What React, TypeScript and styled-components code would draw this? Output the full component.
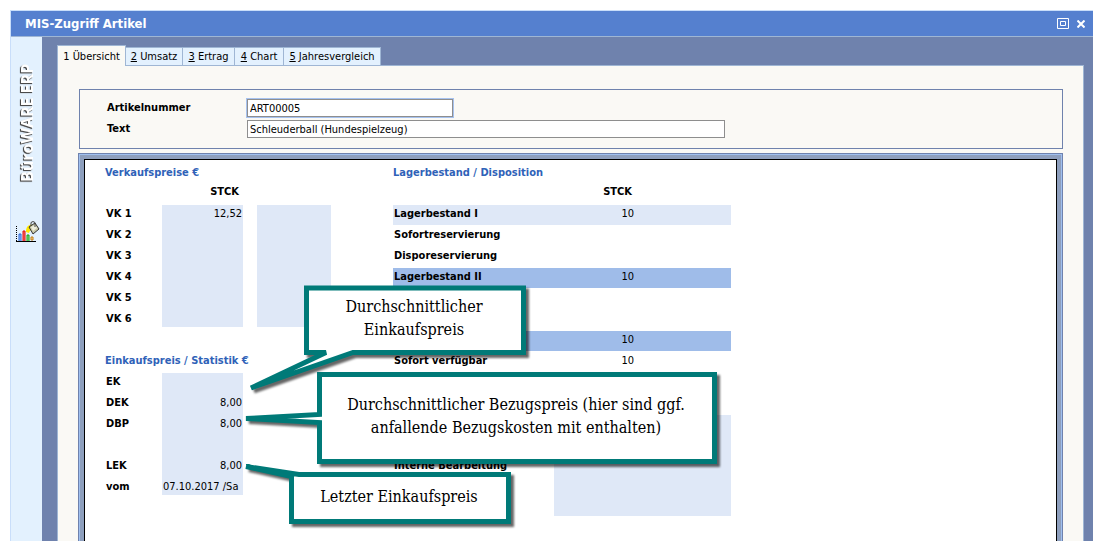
import React from "react";
import styled, { createGlobalStyle, css } from "styled-components";

const sans = `"DejaVu Sans Condensed", "DejaVu Sans", sans-serif`;
const serif = `"DejaVu Serif Condensed", "DejaVu Serif", serif`;

const color = {
  title: "#5580cf",
  slate: "#6f82ad",
  line: "#9fb6d4",
  pale: "#e3f1fe",
  paper: "#faf9f5",
  soft: "#dfe8f7",
  strong: "#9fbce9",
  heading: "#2f62b8",
  teal: "#007a78",
};

const GlobalStyle = createGlobalStyle`
  *, *::before, *::after { box-sizing: border-box; }
  body {
    margin: 0;
    background: #fff;
    color: #000;
    font: 11px/17px ${sans};
  }
`;

const Page = styled.div`
  display: flex;
  min-height: 100vh;
  padding: 10px;
`;

const Window = styled.section`
  flex: 1;
  min-width: 0;
  display: flex;
  flex-direction: column;
  border: solid #c9defa;
  border-width: 1px 0 0 1px;
`;

const TitleBar = styled.header`
  display: flex;
  align-items: center;
  gap: 8px;
  height: 26px;
  padding: 0 8px 0 14px;
  background: ${color.title};
  border-bottom: 1px solid ${color.line};
`;

const Title = styled.h1`
  flex: 1;
  margin: 0;
  color: #fff;
  font-size: 13px;
  line-height: 24px;
`;

const WindowButton = styled.button`
  display: flex;
  padding: 0;
  border: 0;
  background: none;
`;

const Body = styled.div`
  flex: 1;
  display: flex;
  background: ${color.slate};
`;

const Sidebar = styled.aside`
  width: 31px;
  display: flex;
  flex-direction: column;
  align-items: center;
  gap: 39px;
  padding-top: 20px;
  background: ${color.pale};
`;

const Brand = styled.span`
  writing-mode: vertical-rl;
  transform: rotate(180deg);
  height: 125px;
  color: #fff;
  font: 700 16px/20px "Open Sans", sans-serif;
  white-space: nowrap;
  text-shadow: -1px -1px 1px #444, -1px -1px 0 #888;
`;

const SideButton = styled.button`
  display: flex;
  margin-left: 2px;
  padding: 0;
  border: 0;
  background: none;
`;

const Main = styled.main`
  flex: 1;
  min-width: 0;
  display: flex;
  flex-direction: column;
  padding: 8px 9px 0 15px;
`;

const Tabs = styled.nav`
  display: grid;
  grid-template-columns: 69px 57px 52px 49px 97px;
  align-items: end;
  height: 20px;
`;

const Tab = styled.button<{ $active?: boolean }>`
  height: 18px;
  padding: 0;
  border: solid ${color.line};
  border-width: 1px 1px 0 0;
  background: ${color.pale};
  color: #000;
  font: inherit;
  line-height: 17px;
  white-space: nowrap;
  ${(p) =>
    p.$active &&
    css`
      position: relative;
      height: 21px;
      margin-bottom: -1px;
      border-left-width: 1px;
      background: ${color.paper};
    `}
`;

const Panel = styled.div`
  flex: 1;
  display: flex;
  flex-direction: column;
  gap: 4px;
  padding: 23px 20px 0;
  border: solid ${color.line};
  border-width: 1px 1px 0;
  background: ${color.paper};
`;

const Fields = styled.form`
  display: grid;
  grid-template-columns: 140px minmax(0, 478px);
  row-gap: 3px;
  margin-left: 1px;
  padding: 9px 27px 10px;
  border: 1px solid ${color.slate};
`;

const Label = styled.label`
  font-weight: 700;
  line-height: 18px;
`;

const TextInput = styled.input<{ $current?: boolean }>`
  width: 100%;
  height: 18px;
  padding: 0 2px;
  border: 1px solid #8e8e8e;
  border-radius: 0;
  background: #fff;
  color: #000;
  font: inherit;
  ${(p) =>
    p.$current &&
    css`
      max-width: 206px;
      outline: 1px solid #a6c2ef;
    `}
`;

const SheetFrame = styled.div`
  flex: 1;
  display: flex;
  padding: 4px 4px 0;
  border: solid #a0c0ef;
  border-width: 1px 1px 0;
  background: #8e9fbd;
`;

const SheetEdge = styled.div`
  flex: 1;
  display: flex;
  border: solid ${color.slate};
  border-width: 1px 1px 0;
`;

const Sheet = styled.div`
  position: relative;
  flex: 1;
  display: grid;
  grid-template-columns: 226px 339px;
  column-gap: 62px;
  align-content: start;
  padding: 4px 20px 25px;
  border: solid #000;
  border-width: 1px 1px 0;
  background: #fff;
`;

const Column = styled.div`
  display: flex;
  flex-direction: column;
  gap: 25px;
`;

const Heading = styled.h2`
  margin: 0;
  color: ${color.heading};
  font-size: 11px;
  line-height: 18px;
`;

const Table = styled.table<{ $offset?: boolean }>`
  table-layout: fixed;
  border-collapse: separate;
  border-spacing: 0;
  margin-top: ${(p) => (p.$offset ? 3 : 0)}px;
  td, th {
    padding: 0 1px;
    vertical-align: top;
    text-align: left;
    white-space: nowrap;
  }
  thead th {
    height: 23px;
    line-height: 20px;
  }
  tbody tr { height: 21px; }
  tbody tr:last-child { height: 17px; }
`;

const Prices = styled(Table)`
  width: 226px;
  thead th {
    padding-right: 4px;
    text-align: right;
  }
`;

const Amount = styled.td<{ $start?: boolean }>`
  && {
    background: ${color.soft};
    text-align: ${(p) => (p.$start ? "left" : "right")};
  }
`;

const SpareAmount = styled.td`
  border-left: 14px solid #fff;
  background: ${color.soft};
`;

const Stock = styled(Table)`
  width: 338px;
  thead th {
    padding-right: 99px;
    text-align: right;
  }
  td {
    padding-right: 97px;
    text-align: right;
  }
`;

type Tone = "none" | "soft" | "strong" | "block";

const StockRow = styled.tr<{ $tone: Tone }>`
  th, td {
    ${(p) => (p.$tone === "soft" || p.$tone === "strong") && css`
      border-bottom: 1px solid #fff;
      background: ${color[p.$tone as "soft" | "strong"]};
    `}
  }
  td {
    ${(p) => p.$tone === "block" && css`background: ${color.soft};`}
  }
`;

/* Speech bubbles lie over the sheet; each is placed where it points. */
const Callout = styled.div<{ $x: number; $y: number; $w: number; $h: number }>`
  position: absolute;
  left: ${(p) => p.$x}px;
  top: ${(p) => p.$y}px;
  width: ${(p) => p.$w}px;
  height: ${(p) => p.$h}px;
  display: flex;
  align-items: center;
  justify-content: center;
  font: 16px/23px ${serif};
  text-align: center;
  white-space: nowrap;
`;

const Bubble = styled.svg`
  position: absolute;
  left: 0;
  top: 0;
  overflow: visible;
  fill: #fff;
  stroke: ${color.teal};
  stroke-width: 5;
  stroke-miterlimit: 3;
  filter: drop-shadow(3px 3px 1px rgba(0, 0, 0, 0.6));
`;

const CalloutText = styled.p`
  position: relative;
  margin: 0 2px 4px 0;
`;

const tabs = [
  ["1", "Übersicht"],
  ["2", "Umsatz"],
  ["3", "Ertrag"],
  ["4", "Chart"],
  ["5", "Jahresvergleich"],
];

const salePrices = ["12,52", "", "", "", "", ""];

const purchase = [
  ["EK", ""],
  ["DEK", "8,00"],
  ["DBP", "8,00"],
  ["", ""],
  ["LEK", "8,00"],
  ["vom", "07.10.2017 /Sa"],
];

const stock: [string, string, Tone][] = [
  ["Lagerbestand I", "10", "soft"],
  ["Sofortreservierung", "", "none"],
  ["Disporeservierung", "", "none"],
  ["Lagerbestand II", "10", "strong"],
  ["", "", "none"],
  ["", "", "none"],
  ["", "10", "strong"],
  ["Sofort verfügbar", "10", "none"],
  ["", "", "none"],
  ["", "", "none"],
  ["", "", "block"],
  ["", "", "block"],
  ["Interne Bearbeitung", "", "block"],
  ["", "", "block"],
  ["", "", "block"],
];

function ChartIcon() {
  return (
    <svg width="24" height="22" viewBox="0 0 24 22" aria-hidden="true">
      <path d="M.5 5v15" stroke="#000" strokeDasharray="1 1" />
      <path d="M0 20.500h20" stroke="#000" />
      <path d="M3 20v-7h2v7" fill="#9cc4ff" stroke="#2a64d8" />
      <path d="M7 20v-10h2v10" fill="#ff6a6a" stroke="#e01010" />
      <path d="M11 20v-6h2v6" fill="#8fe08f" stroke="#10a010" />
      <path d="M15 19v-3h2v3z" fill="#ffd890" stroke="#c07a10" />
      <path d="M17 4c-4-1-7 1-7 7l3 1c1-3 2-3 4-3z" fill="#ffe600" />
      <path d="M13 6l6-4 4 6-6 5z" fill="#c9c9a8" stroke="#333" />
      <path d="M15 6l4-2 2 3-4 3z" fill="#eeeedc" />
      <path d="M15 5V1.500q2-2 4 0V6" fill="none" stroke="#444" />
    </svg>
  );
}

export default function App() {
  return (
    <>
      <GlobalStyle />
      <Page>
        <Window>
          <TitleBar>
            <Title>MIS-Zugriff Artikel</Title>
            <WindowButton aria-label="Maximieren">
              <svg width="12" height="11" viewBox="0 0 12 11" fill="none" stroke="#fff">
                <path d="M.5.5h11v10H.5zM3.500 3.500h5v4h-5z" />
              </svg>
            </WindowButton>
            <WindowButton aria-label="Schließen">
              <svg width="8" height="8" viewBox="0 0 8 8" fill="none" stroke="#fff" strokeWidth="2">
                <path d="M.5.5l7 7M7.500.5l-7 7" />
              </svg>
            </WindowButton>
          </TitleBar>
          <Body>
            <Sidebar>
              <Brand>BüroWARE ERP</Brand>
              <SideButton aria-label="Auswertung">
                <ChartIcon />
              </SideButton>
            </Sidebar>
            <Main>
              <Tabs>
                {tabs.map(([key, name], i) => (
                  <Tab key={key} $active={i === 0}>
                    {i === 0 ? key : <u>{key}</u>} {name}
                  </Tab>
                ))}
              </Tabs>
              <Panel>
                <Fields>
                  <Label htmlFor="number">Artikelnummer</Label>
                  <TextInput id="number" $current defaultValue="ART00005" />
                  <Label htmlFor="text">Text</Label>
                  <TextInput id="text" defaultValue="Schleuderball (Hundespielzeug)" />
                </Fields>
                <SheetEdge>
                  <SheetFrame>
                    <Sheet>
                      <Column>
                        <section>
                          <Heading>Verkaufspreise €</Heading>
                          <Prices>
                            <colgroup>
                              <col width="57" />
                              <col width="81" />
                              <col width="88" />
                            </colgroup>
                            <thead>
                              <tr>
                                <th />
                                <th>STCK</th>
                                <th />
                              </tr>
                            </thead>
                            <tbody>
                              {salePrices.map((price, i) => (
                                <tr key={i}>
                                  <th>VK {i + 1}</th>
                                  <Amount>{price}</Amount>
                                  <SpareAmount />
                                </tr>
                              ))}
                            </tbody>
                          </Prices>
                        </section>
                        <section>
                          <Heading>Einkaufspreis / Statistik €</Heading>
                          <Prices $offset>
                            <colgroup>
                              <col width="57" />
                              <col width="81" />
                              <col width="88" />
                            </colgroup>
                            <tbody>
                              {purchase.map(([name, value], i) => (
                                <tr key={i}>
                                  <th>{name}</th>
                                  <Amount $start={name === "vom"}>{value}</Amount>
                                  <td />
                                </tr>
                              ))}
                            </tbody>
                          </Prices>
                        </section>
                      </Column>
                      <section>
                        <Heading>Lagerbestand / Disposition</Heading>
                        <Stock>
                          <colgroup>
                            <col width="161" />
                            <col width="177" />
                          </colgroup>
                          <thead>
                            <tr>
                              <th />
                              <th>STCK</th>
                            </tr>
                          </thead>
                          <tbody>
                            {stock.map(([name, value, tone], i) => (
                              <StockRow key={i} $tone={tone}>
                                <th>{name}</th>
                                <td>{value}</td>
                              </StockRow>
                            ))}
                          </tbody>
                        </Stock>
                      </section>
                      <Callout $x={219} $y={125} $w={222} $h={70}>
                        <Bubble width="222" height="70">
                          <path d="M2.500 3H219.500V67.500H49L-53 103L22 67.500H2.500z" />
                        </Bubble>
                        <CalloutText>
                          Durchschnittlicher
                          <br />
                          Einkaufspreis
                        </CalloutText>
                      </Callout>
                      <Callout $x={232} $y={212} $w={400} $h={92}>
                        <Bubble width="400" height="92">
                          <path d="M2.500 2.500H397.500V89.500H2.500V50.500L-71 46.500L2.500 42.500z" />
                        </Bubble>
                        <CalloutText>
                          Durchschnittlicher Bezugspreis (hier sind ggf.
                          <br />
                          anfallende Bezugskosten mit enthalten)
                        </CalloutText>
                      </Callout>
                      <Callout $x={204} $y={312} $w={222} $h={52}>
                        <Bubble width="222" height="52">
                          <path d="M10 2.500H219.500V49.500H2.500V4.500L-43 -5.500z" />
                        </Bubble>
                        <CalloutText>Letzter Einkaufspreis</CalloutText>
                      </Callout>
                    </Sheet>
                  </SheetFrame>
                </SheetEdge>
              </Panel>
            </Main>
          </Body>
        </Window>
      </Page>
    </>
  );
}
